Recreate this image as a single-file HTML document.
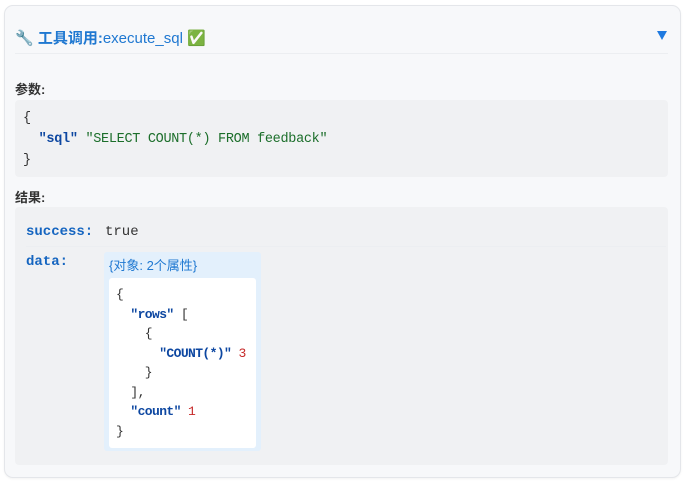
<!DOCTYPE html>
<html><head><meta charset="utf-8"><style>
*{margin:0;padding:0;box-sizing:border-box}
body{width:692px;height:482px;background:#fff;font-family:"Liberation Sans","Noto Sans CJK SC",sans-serif;position:relative;overflow:hidden}
.card{position:absolute;left:4px;top:5px;width:677px;height:473px;background:#f7f8fa;border:1px solid #e4e6ea;border-radius:9px;box-shadow:0 1px 2px rgba(0,0,0,.05)}
.hdr{position:absolute;left:15px;top:27px;font-size:15px;color:#1f78d1;font-weight:bold;white-space:nowrap}
.hdr .n{font-weight:normal}
.tri{position:absolute;left:657px;top:31px;width:0;height:0;border-left:5px solid transparent;border-right:5px solid transparent;border-top:9px solid #1f7ae0}
.div{position:absolute;left:15px;top:53px;width:653px;height:1px;background:#eceef1}
.lbl{position:absolute;left:15px;font-size:13px;font-weight:bold;color:#333}
.box{position:absolute;left:15px;width:653px;background:#f0f1f3;border-radius:4px}
.mono{font-family:"Liberation Mono","DejaVu Sans Mono",monospace;font-size:13px;white-space:pre;position:absolute}
.k{color:#0d47a1;font-weight:bold}
.s{color:#1b6e2a}
.num{color:#c62828}
</style></head><body>
<div class="card"></div>
<div class="hdr">🔧 工具调用:<span class="n">execute_sql</span> <span style="color:#2e9e44">✅</span></div>
<div class="tri"></div>
<div class="div"></div>
<div class="lbl" style="top:79px">参数:</div>
<div class="box" style="top:100px;height:77px"></div>
<div class="mono" style="left:23px;top:108px;line-height:21px;color:#333;font-size:13.5px;letter-spacing:-0.3px">{
  <span class="k">"sql"</span> <span class="s">"SELECT COUNT(*) FROM feedback"</span>
}</div>
<div class="lbl" style="top:187px">结果:</div>
<div class="box" style="top:207px;height:258px"></div>
<div class="mono k" style="left:26px;top:224px;color:#1565c0;font-size:14px">success:</div>
<div class="mono" style="left:105px;top:224px;color:#333;font-size:14px">true</div>
<div style="position:absolute;left:26px;top:246px;width:640px;height:1px;background:#eceef1"></div>
<div class="mono k" style="left:26px;top:254px;color:#1565c0;font-size:14px">data:</div>
<div style="position:absolute;left:104px;top:252px;width:157px;height:199px;background:#e3f0fc;border-radius:3px"></div>
<div style="position:absolute;left:109px;top:255px;font-size:13px;color:#1f78d1">{对象: 2个属性}</div>
<div style="position:absolute;left:109px;top:278px;width:147px;height:170px;background:#fff;border-radius:3px"></div>
<div class="mono" style="left:116px;top:285px;line-height:19.5px;color:#333;letter-spacing:-0.6px">{
  <span class="k">"rows"</span> [
    {
      <span class="k">"COUNT(*)"</span> <span class="num">3</span>
    }
  ],
  <span class="k">"count"</span> <span class="num">1</span>
}</div>
</body></html>
